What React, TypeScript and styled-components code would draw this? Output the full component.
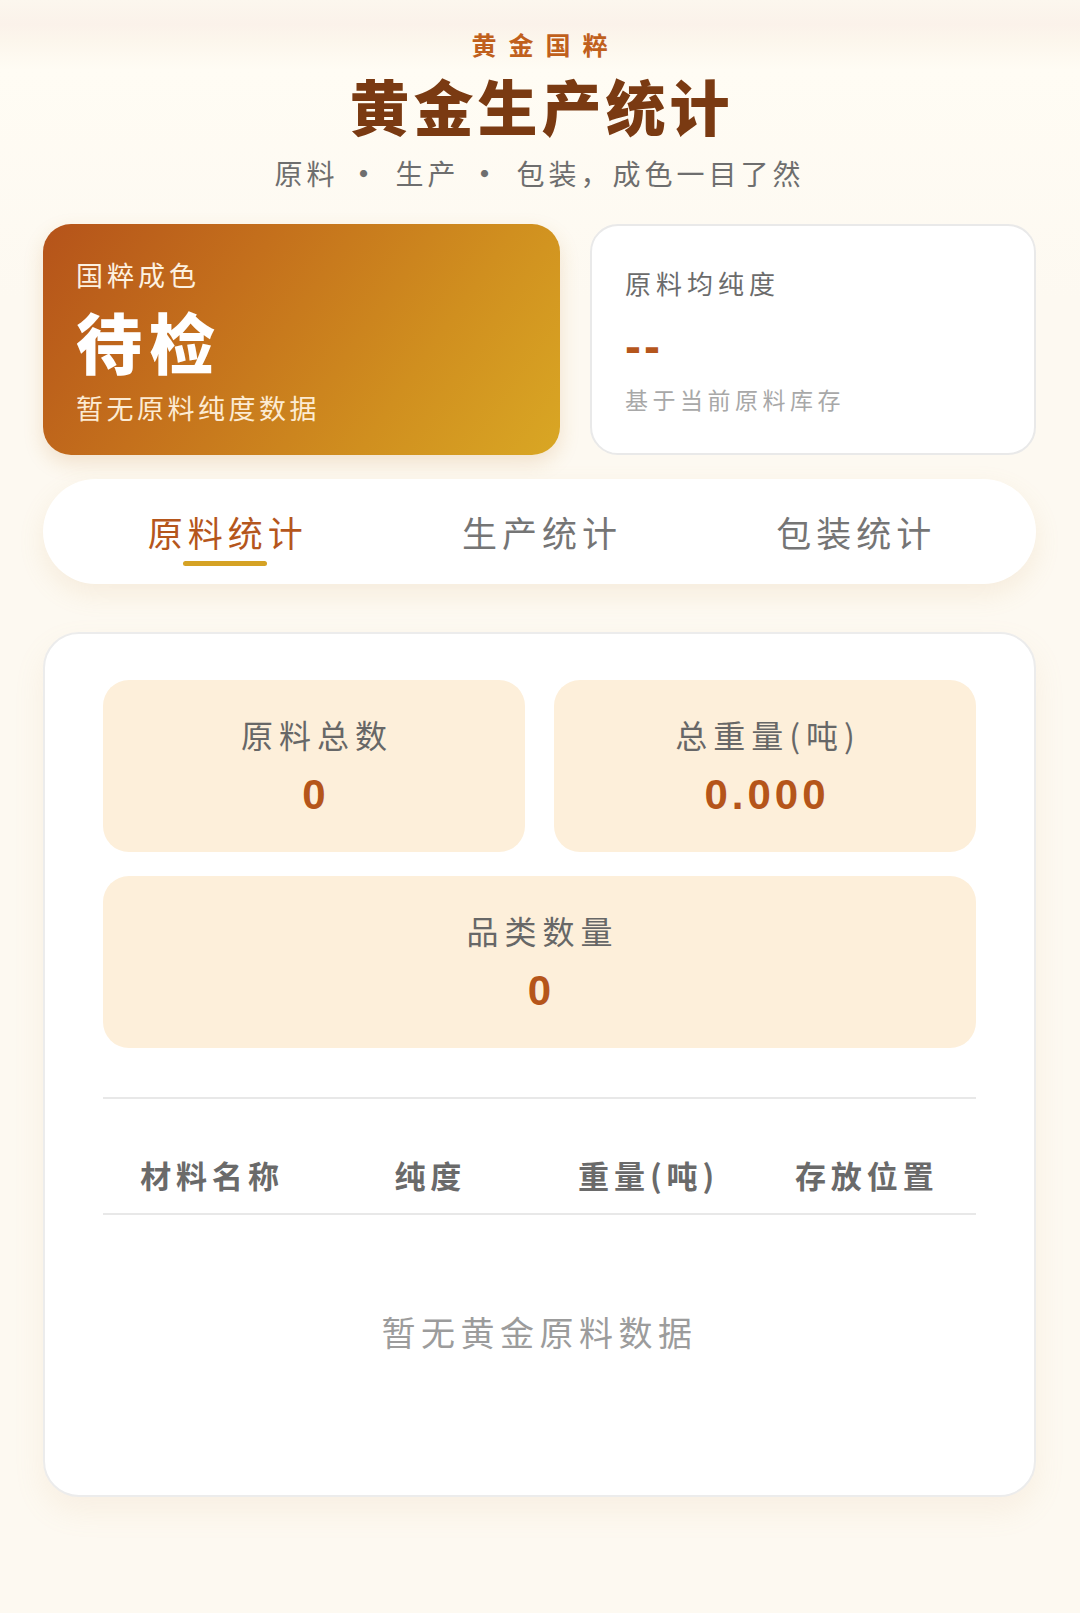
import React from "react";
import styled, { createGlobalStyle } from "styled-components";

const GlobalStyle = createGlobalStyle`
  html, body {
    margin: 0;
    padding: 0;
    background: #fdf9f1;
  }
  body {
    font-family: "Noto Sans CJK SC", "Noto Sans", sans-serif;
    -webkit-font-smoothing: antialiased;
  }
  * { box-sizing: border-box; }
`;

const Page = styled.div`
  min-height: 1613px;
  background: linear-gradient(
    180deg,
    #fcf7ee 0px,
    #fbf2ea 24px,
    #fcf6ec 40px,
    #fffcf4 70px,
    #fdf9f1 300px,
    #fdf9f1 100%
  );
  padding: 0 44px 80px 43px;
  display: flex;
  flex-direction: column;
`;

const Header = styled.header`
  display: flex;
  flex-direction: column;
  align-items: center;
  padding-top: 29px;
`;

const Eyebrow = styled.div`
  font-size: 25px;
  line-height: 30px;
  font-weight: 700;
  letter-spacing: 12px;
  padding-left: 12px;
  color: #c0601c;
`;

const Title = styled.h1`
  margin: 14px 0 0;
  font-size: 60px;
  line-height: 64px;
  font-weight: 900;
  letter-spacing: 4px;
  padding-left: 4px;
  color: #7a3a12;
`;

const Subtitle = styled.div`
  margin-top: 18px;
  font-size: 28px;
  line-height: 36px;
  letter-spacing: 4px;
  color: #6e6e6e;
  display: flex;
  align-items: center;
`;

const Dot = styled.span`
  margin: 0 14px 0 11px;
  font-weight: 700;
`;

const CardRow = styled.section`
  margin-top: 33px;
  display: grid;
  grid-template-columns: 517fr 446fr;
  gap: 30px;
`;

const HeroCard = styled.div`
  height: 231px;
  border-radius: 28px;
  background: linear-gradient(125deg, #b5531a 0%, #c4701c 35%, #d08f1f 70%, #d9a724 100%);
  box-shadow: 0 8px 20px rgba(190, 120, 40, 0.18);
  padding: 35px 33px 0;
  display: flex;
  flex-direction: column;
  color: #fff;
`;

const HeroLabel = styled.div`
  font-size: 27px;
  line-height: 32px;
  letter-spacing: 4px;
  color: #fdf1e0;
`;

const HeroValue = styled.div`
  margin-top: 14px;
  font-size: 66px;
  line-height: 70px;
  font-weight: 900;
  letter-spacing: 7px;
  color: #ffffff;
`;

const HeroNote = styled.div`
  margin-top: 17px;
  font-size: 27px;
  line-height: 32px;
  letter-spacing: 3.5px;
  color: #fcebd3;
`;

const InfoCard = styled.div`
  height: 231px;
  border-radius: 28px;
  background: #ffffff;
  border: 2px solid #e9e9e9;
  padding: 41px 33px 0;
  display: flex;
  flex-direction: column;
`;

const InfoLabel = styled.div`
  font-size: 26px;
  line-height: 32px;
  letter-spacing: 5px;
  color: #6b6b6b;
`;

const InfoValue = styled.div`
  margin-top: 30px;
  font-family: "Liberation Sans", sans-serif;
  font-size: 48px;
  line-height: 36px;
  height: 36px;
  font-weight: 700;
  letter-spacing: 3px;
  color: #b5561c;
`;

const InfoNote = styled.div`
  margin-top: 19px;
  font-size: 23px;
  line-height: 30px;
  letter-spacing: 4.5px;
  color: #a8a8a8;
`;

const TabBar = styled.nav`
  margin-top: 24px;
  height: 105px;
  border-radius: 53px;
  background: #ffffff;
  box-shadow: 0 10px 26px rgba(205, 160, 100, 0.14);
  padding: 33px 25px 0;
  display: grid;
  grid-template-columns: repeat(3, 1fr);
`;

const Tab = styled.div<{ $active?: boolean }>`
  display: flex;
  flex-direction: column;
  align-items: center;
  font-size: 35px;
  line-height: 40px;
  letter-spacing: 5px;
  color: ${(p) => (p.$active ? "#b5561c" : "#757575")};
`;

const TabText = styled.span`
  padding-left: 5px;
`;

const TabLine = styled.span<{ $active?: boolean }>`
  margin-top: 9px;
  width: 84px;
  height: 5px;
  border-radius: 3px;
  background: ${(p) => (p.$active ? "#d5a224" : "transparent")};
`;

const MainCard = styled.section`
  margin-top: 48px;
  border-radius: 36px;
  background: #ffffff;
  border: 2px solid #ececec;
  box-shadow: 0 14px 30px rgba(210, 170, 120, 0.12);
  padding: 46px 58px 46px 58px;
`;

const StatGrid = styled.div`
  display: grid;
  grid-template-columns: 1fr 1fr;
  column-gap: 29px;
  row-gap: 24px;
`;

const StatBox = styled.div<{ $wide?: boolean }>`
  grid-column: ${(p) => (p.$wide ? "1 / -1" : "auto")};
  height: 172px;
  border-radius: 26px;
  background: #fdefda;
  padding-top: 34px;
  display: flex;
  flex-direction: column;
  align-items: center;
`;

const StatLabel = styled.div`
  font-size: 32px;
  line-height: 40px;
  letter-spacing: 6px;
  padding-left: 6px;
  color: #676767;
`;

const StatValue = styled.div`
  margin-top: 16px;
  font-family: "Liberation Sans", sans-serif;
  font-size: 42px;
  line-height: 50px;
  font-weight: 700;
  letter-spacing: 4px;
  padding-left: 4px;
  color: #b5551a;
`;

const Divider = styled.hr`
  margin: 49px 0 0;
  border: 0;
  height: 2px;
  background: #e8e8e8;
`;

const Table = styled.table`
  margin-top: 38px;
  width: 100%;
  border-collapse: collapse;
  table-layout: fixed;
`;

const Th = styled.th`
  padding: 18px 0;
  font-size: 31px;
  line-height: 40px;
  font-weight: 700;
  letter-spacing: 5px;
  color: #6a6a6a;
  text-align: center;
  border-bottom: 2px solid #e8e8e8;
`;

const EmptyCell = styled.td`
  padding: 95px 0 95px;
  text-align: center;
  font-size: 34px;
  line-height: 44px;
  letter-spacing: 5.5px;
  color: #9c9c9c;
`;

export default function App() {
  return (
    <>
      <GlobalStyle />
      <Page>
        <Header>
          <Eyebrow>黄金国粹</Eyebrow>
          <Title>黄金生产统计</Title>
          <Subtitle>
            原料<Dot>·</Dot>生产<Dot>·</Dot>包装，成色一目了然
          </Subtitle>
        </Header>

        <CardRow>
          <HeroCard>
            <HeroLabel>国粹成色</HeroLabel>
            <HeroValue>待检</HeroValue>
            <HeroNote>暂无原料纯度数据</HeroNote>
          </HeroCard>
          <InfoCard>
            <InfoLabel>原料均纯度</InfoLabel>
            <InfoValue>--</InfoValue>
            <InfoNote>基于当前原料库存</InfoNote>
          </InfoCard>
        </CardRow>

        <TabBar>
          <Tab $active>
            <TabText>原料统计</TabText>
            <TabLine $active />
          </Tab>
          <Tab>
            <TabText>生产统计</TabText>
            <TabLine />
          </Tab>
          <Tab>
            <TabText>包装统计</TabText>
            <TabLine />
          </Tab>
        </TabBar>

        <MainCard>
          <StatGrid>
            <StatBox>
              <StatLabel>原料总数</StatLabel>
              <StatValue>0</StatValue>
            </StatBox>
            <StatBox>
              <StatLabel>总重量(吨)</StatLabel>
              <StatValue>0.000</StatValue>
            </StatBox>
            <StatBox $wide>
              <StatLabel>品类数量</StatLabel>
              <StatValue>0</StatValue>
            </StatBox>
          </StatGrid>
          <Divider />
          <Table>
            <thead>
              <tr>
                <Th>材料名称</Th>
                <Th>纯度</Th>
                <Th>重量(吨)</Th>
                <Th>存放位置</Th>
              </tr>
            </thead>
            <tbody>
              <tr>
                <EmptyCell colSpan={4}>暂无黄金原料数据</EmptyCell>
              </tr>
            </tbody>
          </Table>
        </MainCard>
      </Page>
    </>
  );
}
